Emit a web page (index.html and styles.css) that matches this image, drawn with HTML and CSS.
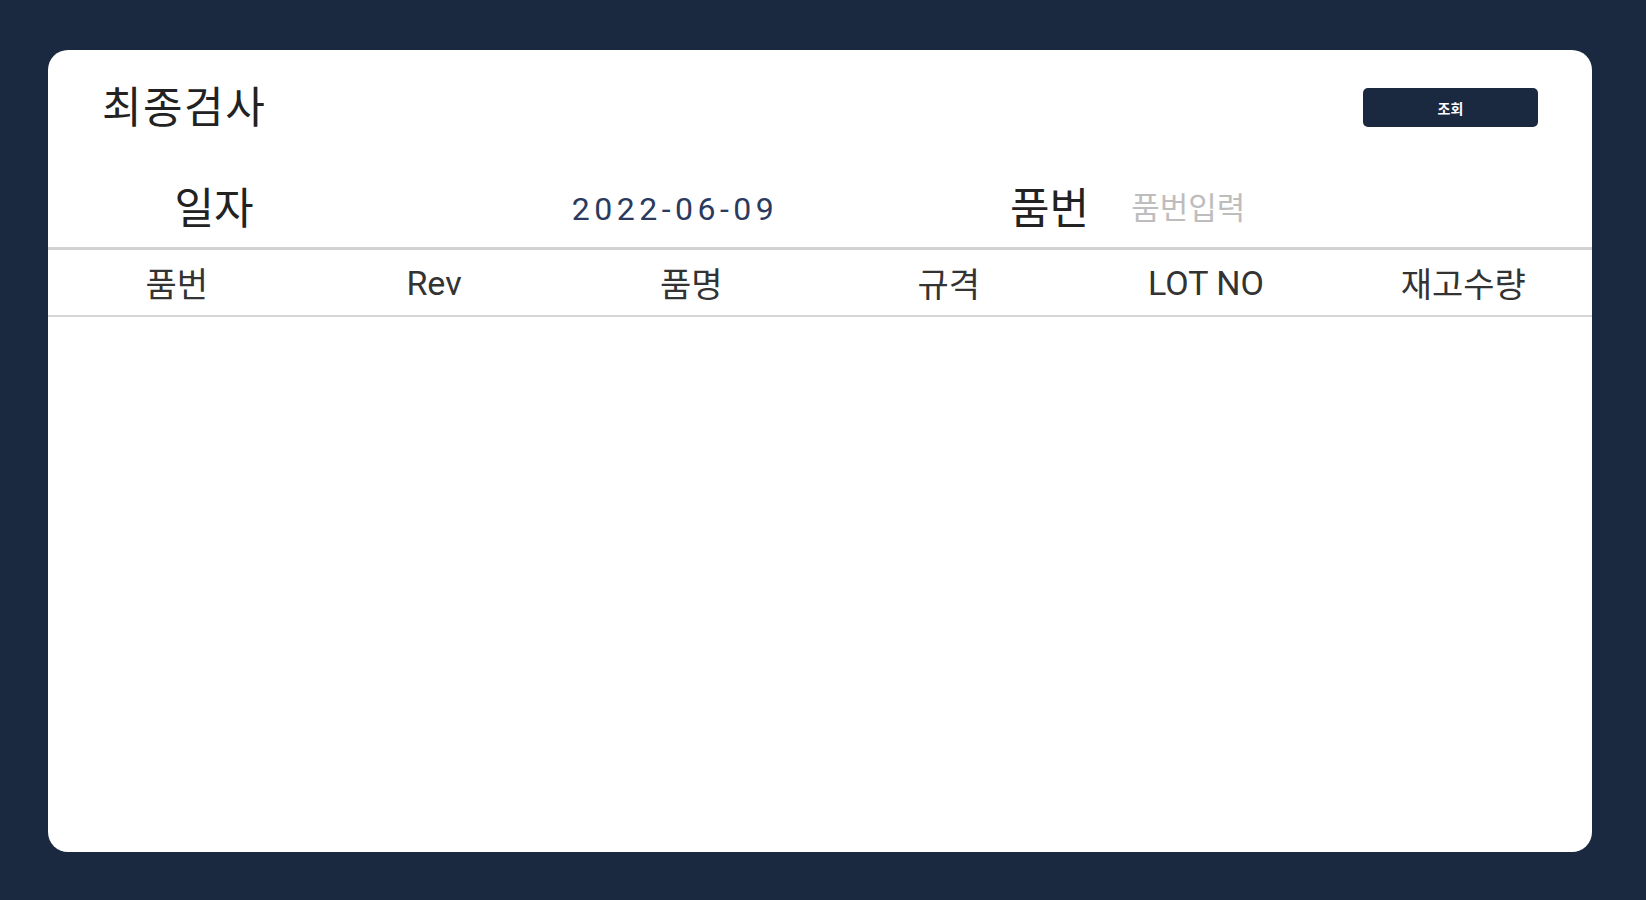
FILE: index.html
```html
<!DOCTYPE html>
<html lang="ko">
<head>
<meta charset="utf-8">
<title>최종검사</title>
<link rel="stylesheet" href="styles.css">
</head>
<body>
<div class="card">
  <div class="top">
    <h1 class="title">최종검사</h1>
    <button class="btn">조회</button>
  </div>
  <div class="filter">
    <div class="lbl lbl-date">일자</div>
    <div class="date">2022-06-09</div>
    <div class="lbl lbl-part">품번</div>
    <input class="inp" type="text" placeholder="품번입력">
  </div>
  <div class="thead">
    <div class="th">품번</div>
    <div class="th">Rev</div>
    <div class="th">품명</div>
    <div class="th">규격</div>
    <div class="th">LOT NO</div>
    <div class="th">재고수량</div>
  </div>
  <div class="tbody"></div>
</div>
</body>
</html>
```

FILE: styles.css
```css
* { box-sizing: border-box; }
html, body { margin: 0; padding: 0; }
body {
  width: 1646px;
  height: 900px;
  background: #1b2940;
  font-family: Roboto, "Noto Sans CJK KR", sans-serif;
  padding: 50px 54px 48px 48px;
  overflow: hidden;
}
.card {
  background: #fff;
  border-radius: 20px;
  height: 802px;
  display: flex;
  flex-direction: column;
  overflow: hidden;
}
.top {
  display: flex;
  justify-content: space-between;
  align-items: flex-start;
  padding: 34px 54px 0 54px;
  height: 118px;
}
.title {
  margin: 0;
  font-size: 43px;
  font-weight: 400;
  letter-spacing: 1.5px;
  color: #222;
  line-height: 48px;
}
.btn {
  margin-top: 4px;
  width: 175px;
  height: 39px;
  background: #1b2940;
  color: #fff;
  border: none;
  border-radius: 5px;
  font-family: Roboto, "Noto Sans CJK KR", sans-serif;
  font-size: 14px;
  font-weight: 700;
}
.filter {
  display: flex;
  align-items: center;
  height: 82px;
  border-bottom: 3px solid #d2d2d2;
  padding-top: 2px;
}
.lbl {
  font-size: 43px;
  color: #222;
  line-height: 48px;
}
.lbl-date { width: 332px; text-align: center; }
.date {
  width: 590px;
  text-align: center;
  font-size: 32px;
  letter-spacing: 4.5px;
  color: #2b3a5e;
}
.lbl-part { margin-left: 40px; }
.inp {
  margin-left: 42px;
  border: none;
  outline: none;
  font-family: Roboto, "Noto Sans CJK KR", sans-serif;
  font-size: 31px;
  color: #333;
  width: 300px;
  padding: 0;
}
.inp::placeholder { color: #bdbdbd; }
.thead {
  display: grid;
  grid-template-columns: repeat(6, 1fr);
  align-items: center;
  height: 67px;
  border-bottom: 2px solid #d6d6d6;
}
.th {
  text-align: center;
  font-size: 34px;
  color: #333;
}
.tbody { flex: 1; }
```
